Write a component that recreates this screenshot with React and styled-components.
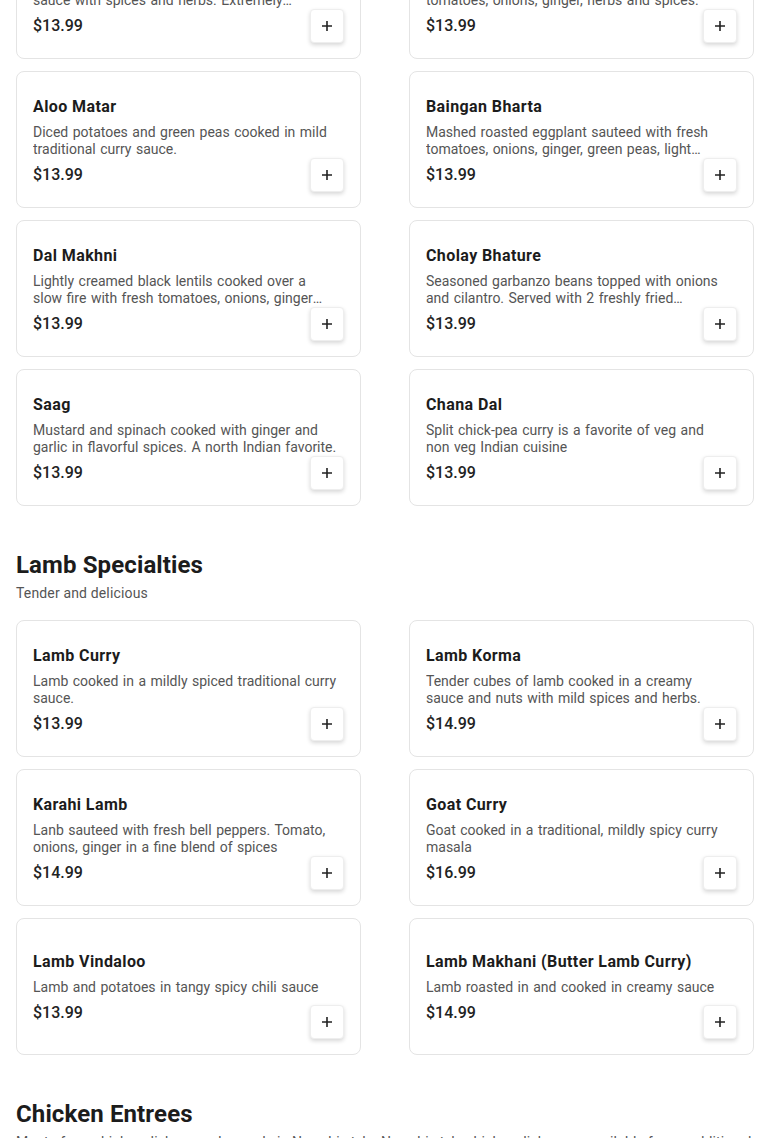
import React from "react";
import styled, { createGlobalStyle } from "styled-components";

const Global = createGlobalStyle`
  html, body { margin: 0; padding: 0; background: #ffffff; }
  body { font-family: Roboto, "Noto Sans", "Liberation Sans", sans-serif; color: #1c1c1c; overflow: hidden; }
  * { box-sizing: border-box; }
`;

const Page = styled.main`
  padding: 0 16px;
  margin-top: -149px;
`;

const Section = styled.section`
  margin-bottom: 43px;
`;

const SectionTitle = styled.h2`
  margin: 0;
  font-size: 24px;
  line-height: 32px;
  font-weight: 700;
  letter-spacing: 0.12px;
  color: #1c1c1c;
`;

const SectionSub = styled.p`
  margin: 2px 0 17px;
  font-size: 14px;
  line-height: 20px;
  letter-spacing: 0.15px;
  color: #555;
`;

const Grid = styled.div`
  display: grid;
  grid-template-columns: 1fr 1fr;
  column-gap: 48px;
  row-gap: 12px;
`;

const Card = styled.article`
  position: relative;
  height: 137px;
  border: 1px solid #e4e4e4;
  border-radius: 8px;
  background: #fff;
  padding: 17px 16px 15px;
  display: flex;
  flex-direction: column;
  justify-content: center;
`;

const Body = styled.div`
  padding-right: 7px;
`;

const Title = styled.h3`
  margin: 0;
  font-size: 16px;
  line-height: 24px;
  font-weight: 700;
  letter-spacing: 0.4px;
  color: #1c1c1c;
`;

const Desc = styled.p`
  margin: 5px 0 0;
  font-size: 14px;
  line-height: 17px;
  letter-spacing: 0;
  word-spacing: 1px;
  color: #555;
  display: -webkit-box;
  -webkit-line-clamp: 2;
  -webkit-box-orient: vertical;
  overflow: hidden;
`;

const Price = styled.div`
  margin-top: 5px;
  font-size: 16px;
  line-height: 24px;
  font-weight: 500;
  color: #222;
`;

const AddButton = styled.button`
  position: absolute;
  right: 16px;
  bottom: 15px;
  width: 34px;
  height: 34px;
  padding: 0;
  border: 1px solid #eeeeee;
  border-radius: 4px;
  background: #fff;
  box-shadow: 0 2px 4px rgba(0, 0, 0, 0.16);
  display: flex;
  align-items: center;
  justify-content: center;
  color: #222;
  cursor: pointer;
`;

const PlusIcon = () => (
  <svg width="12" height="12" viewBox="0 0 12 12" fill="none" stroke="currentColor" strokeWidth="1.6">
    <path d="M6 1v10M1 6h10" />
  </svg>
);

const sections = [
  {
    title: "Vegetarian Entrees",
    sub: "Fresh and flavorful",
    items: [
      { name: "Malai Kofta", desc: "Homemade vegetable dumplings in a creamy sauce with spices and herbs. Extremely delicious and rich.", price: "$13.99" },
      { name: "Aloo Gobi", desc: "Potatoes and cauliflower sauteed with fresh tomatoes, onions, ginger, herbs and spices.", price: "$13.99" },
      { name: "Aloo Matar", desc: "Diced potatoes and green peas cooked in mild traditional curry sauce.", price: "$13.99" },
      { name: "Baingan Bharta", desc: "Mashed roasted eggplant sauteed with fresh tomatoes, onions, ginger, green peas, light cream and spices.", price: "$13.99" },
      { name: "Dal Makhni", desc: "Lightly creamed black lentils cooked over a slow fire with fresh tomatoes, onions, ginger and garlic.", price: "$13.99" },
      { name: "Cholay Bhature", desc: "Seasoned garbanzo beans topped with onions and cilantro. Served with 2 freshly fried bhaturas (puffed bread).", price: "$13.99" },
      { name: "Saag", desc: "Mustard and spinach cooked with ginger and garlic in flavorful spices. A north Indian favorite.", price: "$13.99" },
      { name: "Chana Dal", desc: "Split chick-pea curry is a favorite of veg and non veg Indian cuisine", price: "$13.99" },
    ],
  },
  {
    title: "Lamb Specialties",
    sub: "Tender and delicious",
    items: [
      { name: "Lamb Curry", desc: "Lamb cooked in a mildly spiced traditional curry sauce.", price: "$13.99" },
      { name: "Lamb Korma", desc: "Tender cubes of lamb cooked in a creamy sauce and nuts with mild spices and herbs.", price: "$14.99" },
      { name: "Karahi Lamb", desc: "Lanb sauteed with fresh bell peppers. Tomato, onions, ginger in a fine blend of spices", price: "$14.99" },
      { name: "Goat Curry", desc: "Goat cooked in a traditional, mildly spicy curry masala", price: "$16.99" },
      { name: "Lamb Vindaloo", desc: "Lamb and potatoes in tangy spicy chili sauce", price: "$13.99" },
      { name: "Lamb Makhani (Butter Lamb Curry)", desc: "Lamb roasted in and cooked in creamy sauce", price: "$14.99" },
    ],
  },
  {
    title: "Chicken Entrees",
    sub: "Most of our chicken dishes can be made in Nawabi style. Nawabi style chicken dishes are available for an additional $1.00. Prices will be adjusted accordingly.",
    items: [
      { name: "Chicken Curry", desc: "Boneless chicken cooked in a traditional curry sauce.", price: "$13.99" },
      { name: "Chicken Korma", desc: "Boneless chicken cooked in a creamy sauce with nuts.", price: "$14.99" },
    ],
  },
];

const MenuCard = ({ item }) => (
  <Card>
    <Body>
      <Title>{item.name}</Title>
      <Desc>{item.desc}</Desc>
      <Price>{item.price}</Price>
    </Body>
    <AddButton aria-label={`Add ${item.name}`}>
      <PlusIcon />
    </AddButton>
  </Card>
);

export default function App() {
  return (
    <>
      <Global />
      <Page>
        {sections.map((s) => (
          <Section key={s.title}>
            <SectionTitle>{s.title}</SectionTitle>
            <SectionSub>{s.sub}</SectionSub>
            <Grid>
              {s.items.map((it) => (
                <MenuCard key={it.name} item={it} />
              ))}
            </Grid>
          </Section>
        ))}
      </Page>
    </>
  );
}
